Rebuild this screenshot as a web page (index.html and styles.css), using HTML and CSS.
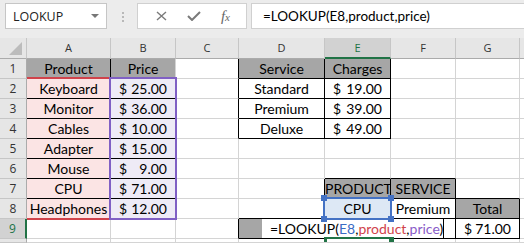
FILE: index.html
```html
<!DOCTYPE html>
<html lang="en">
<head>
  <meta charset="UTF-8">
  <title>LOOKUP</title>
  <link rel="stylesheet" href="styles.css">
</head>
<body>
  <div class="toolbar">
    <div class="namebox"><span>LOOKUP</span><span class="caret"></span></div>
    <div class="grip"><span></span><span></span><span></span></div>
    <div class="fbuttons">
      <svg class="ico" width="11" height="10" viewBox="0 0 11 10"><path d="M1 1 L10 9 M10 1 L1 9" stroke="#7a7a7a" stroke-width="1.4" fill="none"/></svg>
      <svg class="ico" width="14" height="10" viewBox="0 0 14 10"><path d="M1 5 L5 9 L13 1" stroke="#7a7a7a" stroke-width="2" fill="none"/></svg>
      <span class="fx">f<small>x</small></span>
    </div>
    <div class="formula">=LOOKUP(E8,product,price)</div>
  </div>

  <div class="sheet">
    <div class="grid">
      <div class="c ch corner"><svg width="26" height="20" viewBox="0 0 26 20"><path d="M22 4 L22 17 L9 17 Z" fill="#bcbcbc"/></svg></div>
      <div class="c ch">A</div><div class="c ch">B</div><div class="c ch">C</div><div class="c ch">D</div>
      <div class="c ch on">E</div><div class="c ch">F</div><div class="c ch">G</div><div class="c ch end"></div>

      <div class="c rh">1</div>
      <div class="c hd b-r">Product</div><div class="c hd">Price</div><div class="c b-r"></div>
      <div class="c hd b-b b-r">Service</div><div class="c hd b-b b-r">Charges</div>
      <div class="c"></div><div class="c"></div><div class="c end"></div>

      <div class="c rh">2</div>
      <div class="c pk b-b">Keyboard</div><div class="c lv b-b cur"><span>$</span><span>25.00</span></div><div class="c b-r"></div>
      <div class="c b-b b-r">Standard</div><div class="c b-b b-r cur"><span>$</span><span>19.00</span></div>
      <div class="c"></div><div class="c"></div><div class="c end"></div>

      <div class="c rh">3</div>
      <div class="c pk b-b">Monitor</div><div class="c lv b-b cur"><span>$</span><span>36.00</span></div><div class="c b-r"></div>
      <div class="c b-b b-r">Premium</div><div class="c b-b b-r cur"><span>$</span><span>39.00</span></div>
      <div class="c"></div><div class="c"></div><div class="c end"></div>

      <div class="c rh">4</div>
      <div class="c pk b-b">Cables</div><div class="c lv b-b cur"><span>$</span><span>10.00</span></div><div class="c b-r"></div>
      <div class="c b-b b-r">Deluxe</div><div class="c b-b b-r cur"><span>$</span><span>49.00</span></div>
      <div class="c"></div><div class="c"></div><div class="c end"></div>

      <div class="c rh">5</div>
      <div class="c pk b-b">Adapter</div><div class="c lv b-b cur"><span>$</span><span>15.00</span></div><div class="c"></div>
      <div class="c"></div><div class="c"></div>
      <div class="c"></div><div class="c"></div><div class="c end"></div>

      <div class="c rh">6</div>
      <div class="c pk b-b">Mouse</div><div class="c lv b-b cur"><span>$</span><span>9.00</span></div><div class="c"></div>
      <div class="c"></div><div class="c b-b"></div>
      <div class="c b-b"></div><div class="c"></div><div class="c end"></div>

      <div class="c rh">7</div>
      <div class="c pk b-b">CPU</div><div class="c lv b-b cur"><span>$</span><span>71.00</span></div><div class="c"></div>
      <div class="c b-r"></div><div class="c hd b-b b-r">PRODUCT</div>
      <div class="c hd b-b b-r">SERVICE</div><div class="c b-b"></div><div class="c end"></div>

      <div class="c rh">8</div>
      <div class="c pk">Headphones</div><div class="c lv cur"><span>$</span><span>12.00</span></div><div class="c"></div>
      <div class="c b-b"></div><div class="c pick b-b">CPU</div>
      <div class="c b-b b-r">Premium</div><div class="c hd b-b b-r">Total</div><div class="c end"></div>

      <div class="c rh on">9</div>
      <div class="c"></div><div class="c"></div><div class="c b-r"></div>
      <div class="c hd b-b"></div><div class="c b-b"></div>
      <div class="c b-b b-r"></div><div class="c b-b b-r cur"><span>$</span><span>71.00</span></div><div class="c end"></div>

      <div class="c rh"></div>
      <div class="c"></div><div class="c"></div><div class="c"></div><div class="c"></div>
      <div class="c"></div><div class="c"></div><div class="c"></div><div class="c end"></div>
    </div>

    <div class="marks">
      <div class="range product"></div>
      <div class="range price"></div>
      <div class="range ref"><i class="h tl"></i><i class="h tr"></i><i class="h bl"></i><i class="h br"></i></div>
      <div class="editor">=LOOKUP(<span class="k-ref">E8</span>,<span class="k-prod">product</span>,<span class="k-price">price</span>)</div>
      <div class="active"><i class="stub"></i><i class="fill"></i></div>
    </div>
  </div>
</body>
</html>
```

FILE: styles.css
```css
* {
  box-sizing: border-box;
  margin: 0;
  padding: 0;
}

body {
  width: 524px;
  height: 243px;
  overflow: hidden;
  background: #fff;
  color: #000;
  font-family: 'Lato', sans-serif;
}

/* formula bar */
.toolbar {
  display: flex;
  align-items: flex-start;
  height: 38px;
  padding: 3px 0 0 5px;
  background: #ececec;
}

.namebox {
  width: 102px;
  height: 26px;
  display: flex;
  align-items: center;
  justify-content: space-between;
  padding: 0 7px 0 7px;
  background: #fff;
  border: 1px solid #c6c6c6;
  font-family: 'Open Sans', sans-serif;
  font-size: 12.5px;
  color: #222;
}

.caret {
  border-left: 4px solid transparent;
  border-right: 4px solid transparent;
  border-top: 4px solid #777;
}

.grip {
  display: flex;
  flex-direction: column;
  gap: 2px;
  width: 2px;
  margin: 9px 13px 0 15px;
}

.grip span {
  width: 2px;
  height: 2px;
  background: #b8b8b8;
}

.fbuttons {
  width: 110px;
  height: 26px;
  display: flex;
  align-items: center;
  justify-content: space-around;
  padding: 0 6px 0 8px;
  background: #fff;
  border: 1px solid #d0d0d0;
}

.fx {
  font-family: 'Liberation Serif', serif;
  font-style: italic;
  font-size: 15px;
  color: #666;
}

.fx small {
  font-size: 11px;
}

.formula {
  flex: 1;
  height: 26px;
  margin-left: 4px;
  padding-left: 11px;
  background: #fff;
  border: 1px solid #d0d0d0;
  border-right: none;
  font-size: 13.5px;
  line-height: 24px;
  white-space: nowrap;
}

/* sheet */
.sheet {
  position: relative;
}

.grid,
.marks {
  display: grid;
  grid-template-columns: 27px 84px 65px 63px 86px 66px 65px 64px 1fr;
  grid-template-rows: 21px repeat(9, 20px) 1fr;
  height: 205px;
}

.marks {
  position: absolute;
  inset: 0;
  pointer-events: none;
}

.c {
  border-right: 1px solid #d4d4d4;
  border-bottom: 1px solid #d4d4d4;
  font-size: 14px;
  line-height: 19px;
  text-align: center;
  white-space: nowrap;
}

.c.end {
  border-right: none;
}

.ch,
.rh {
  background: #e6e6e6;
  font-family: 'Open Sans', sans-serif;
  color: #333;
}

.ch {
  border-right-color: #c6c6c6;
  border-bottom-color: #ababab;
  font-size: 11px;
  line-height: 20px;
}

.rh {
  border-right-color: #ababab;
  border-bottom-color: #c6c6c6;
  font-size: 12px;
}

.ch.on {
  background: #d2d2d2;
  border-bottom: 2px solid #217346;
  color: #217346;
}

.rh.on {
  background: #d2d2d2;
  border-right: 2px solid #217346;
  color: #217346;
}

.corner svg {
  display: block;
}

.hd { background: #a6a6a6; }
.pk { background: #fbe4e4; }
.lv { background: #eeebf6; }
.pick { background: #dde8f5; }

.b-b { border-bottom-color: #000; }
.b-r { border-right-color: #000; }

.cur {
  display: flex;
  justify-content: space-between;
  padding: 0 8px;
}

/* reference highlights drawn over the cells */
.range {
  position: relative;
}

.product {
  grid-row: 3 / 10;
  grid-column: 2 / 3;
  margin: -2px 0 -1px 0;
  border-top: 2px solid #d0434b;
  border-bottom: 2px solid #d0434b;
}

.price {
  grid-row: 3 / 10;
  grid-column: 3 / 4;
  margin: -2px -1px -1px -2px;
  border: 2px solid #8060c4;
}

.ref {
  grid-row: 9 / 10;
  grid-column: 6 / 7;
  margin: -2px -1px -1px -2px;
  border: 2px solid #4472c4;
}

.h {
  position: absolute;
  width: 6px;
  height: 6px;
  background: #4472c4;
}

.tl { left: -4px; top: -4px; }
.tr { right: -4px; top: -4px; }
.bl { left: -4px; bottom: -4px; }
.br { right: -4px; bottom: -4px; }

.editor {
  grid-row: 10 / 11;
  grid-column: 5 / 8;
  margin: 0 12px 1px 23px;
  padding-left: 8px;
  background: #fff;
  border-right: 1px solid #000;
  font-size: 14px;
  line-height: 19px;
  text-align: center;
  white-space: nowrap;
}

.k-ref { color: #3b6cc4; }
.k-prod { color: #d0434b; }
.k-price { color: #8a5cc8; }

.active {
  position: relative;
  grid-row: 10 / 11;
  grid-column: 6 / 7;
  align-self: end;
  height: 2px;
  margin-left: -1px;
  background: #217346;
}

.active .stub {
  position: absolute;
  left: 0;
  top: 0;
  width: 3px;
  height: 5px;
  background: #217346;
}

.active .fill {
  position: absolute;
  right: -3px;
  top: 0;
  width: 5px;
  height: 5px;
  background: #217346;
}
```
